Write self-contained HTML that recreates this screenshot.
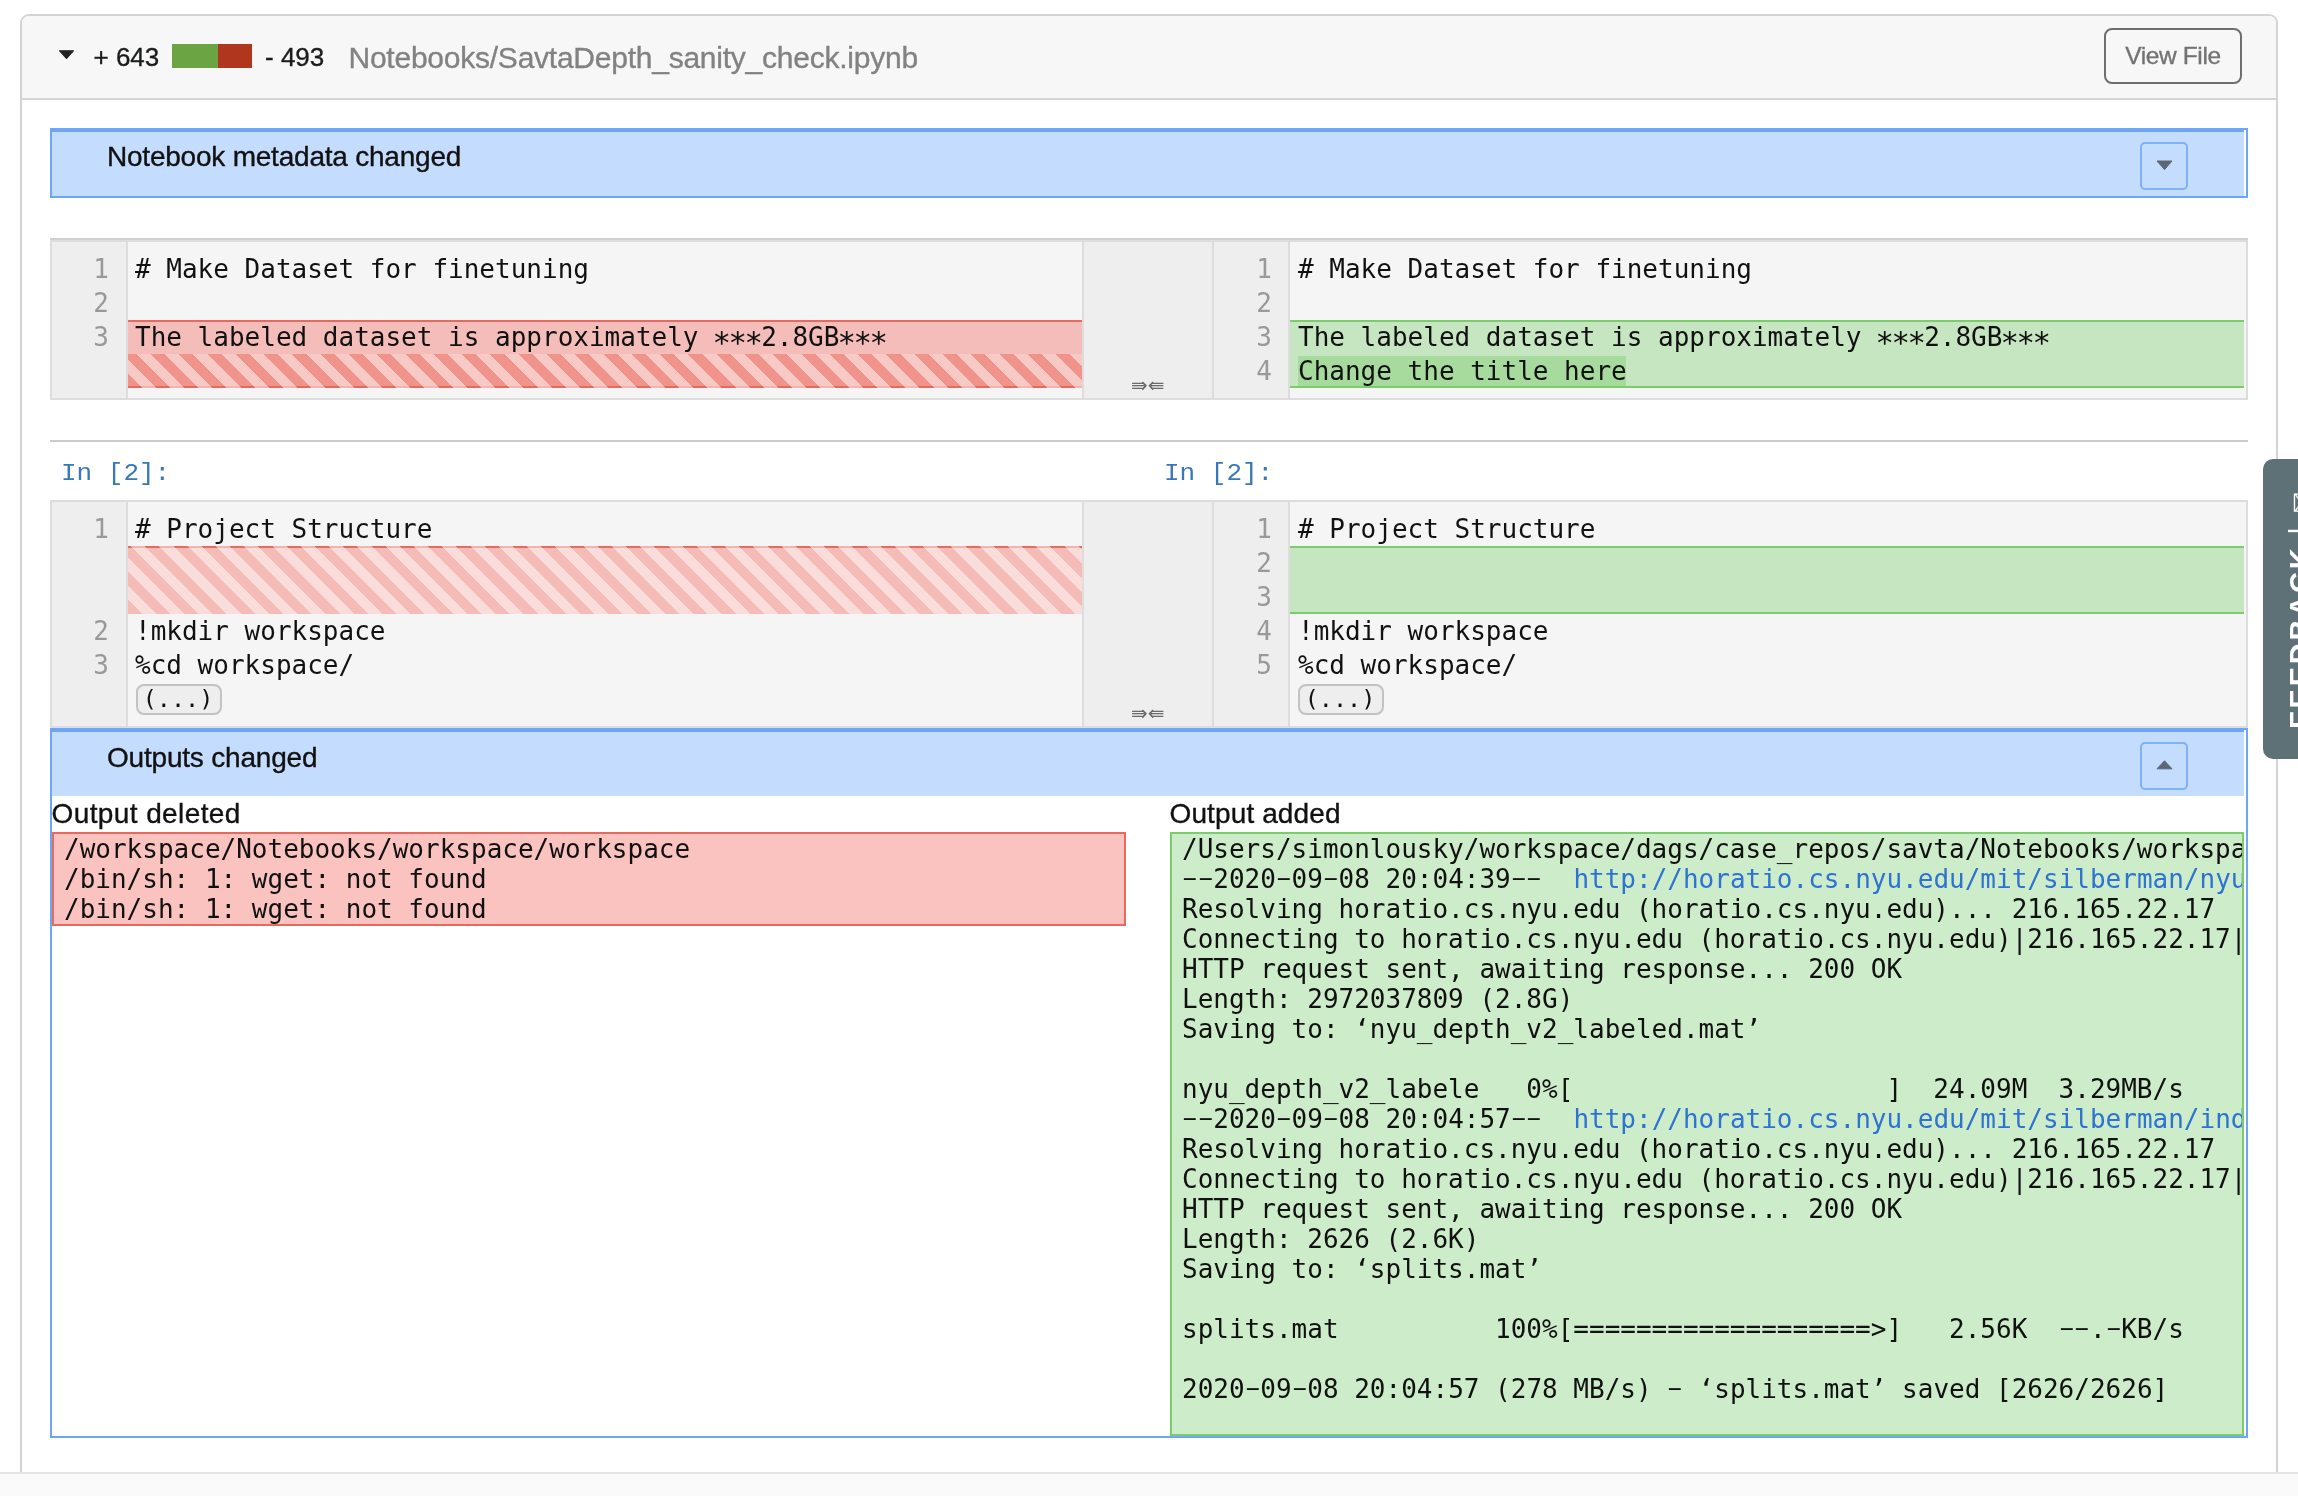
<!DOCTYPE html>
<html lang="en">
<head>
<meta charset="utf-8">
<title>Notebooks/SavtaDepth_sanity_check.ipynb diff</title>
<style>
*{box-sizing:border-box;margin:0;padding:0}
html,body{width:2298px;height:1496px;background:#fff}
#root{position:relative;width:2298px;height:1496px;overflow:hidden;background:#fff;will-change:transform;font-family:"Liberation Sans",sans-serif;color:#1b1c1d}
.abs{position:absolute}
.mono{font-family:"DejaVu Sans Mono","Liberation Mono",monospace}
/* Lato-like weight */
.stat,#fname,#vf,.ban .t,.olabel{-webkit-text-stroke:0.35px currentColor}
/* outer file box */
#box{left:20px;top:14px;width:2258px;height:1470px;border:2px solid #d4d4d5;border-radius:9px 9px 0 0;border-bottom:none;background:#fff}
#hdr{left:22px;top:16px;width:2254px;height:84px;background:#f7f7f7;border-bottom:2px solid #d4d4d5;border-radius:7px 7px 0 0}
#tri{left:58px;top:48px;width:18px;height:14px}
.stat{top:41px;font-size:26px;line-height:32px;color:#1b1c1d;white-space:nowrap}
#bar-g{left:172px;top:44px;width:46px;height:24px;background:#6aa443}
#bar-r{left:218px;top:44px;width:34px;height:24px;background:#b1361e}
#fname{left:348.5px;top:39px;font-size:30px;line-height:38px;color:#828282;white-space:nowrap;letter-spacing:-0.24px}
#vf{left:2104px;top:28px;width:138px;height:56px;border:2px solid #6e6e6e;border-radius:8px;background:#f7f7f7;color:#737373;font-size:24.5px;line-height:52px;text-align:center;letter-spacing:-0.4px}
/* blue banners */
.ban{left:50px;width:2198px;background:#c4dcfd;border:2px solid #6ea6f7;border-top-width:4px}
.ban .t{left:55px;font-size:28px;line-height:34px;color:#111;white-space:nowrap}
.ban .btn{left:2088px;width:48px;height:48px;border:2px solid #7db1f9;border-radius:5px;background:#c4dcfd}
.ban .wl{left:2192px;top:-2px;width:2px;background:#fff}
/* editors */
.ed{background:#f5f5f5;border:2px solid #dddddd}
.gut{background:#eeeeee;border-right:2px solid #dddddd}
.ln{font-size:26px;line-height:34px;color:#999;text-align:right;width:58px;white-space:pre}
.cl{font-size:26px;line-height:34px;color:#111;white-space:pre}
.gap{background:#eeeeee;border-top:2px solid #ddd;border-bottom:2px solid #ddd}
.arrows{font-family:"DejaVu Sans",sans-serif;font-size:20px;line-height:20px;color:#6b6b6b;white-space:nowrap}
.fold{border:2px solid #c2c2c2;border-radius:8px;background:#eeeeee;font-size:23.5px;line-height:27px;color:#111;text-align:center;white-space:pre;padding-right:2px}
.prompt{font-family:"Liberation Mono",monospace;font-size:26px;line-height:30px;color:#3877b8;white-space:pre;transform:scaleY(.9);transform-origin:0 77%}
/* hatches */
.hatch-d{background-color:#f0948b;background-image:repeating-linear-gradient(45deg,rgba(255,255,255,0) 0,rgba(255,255,255,0) 10px,rgba(255,255,255,.5) 10px,rgba(255,255,255,.5) 20px)}
.stripes{background-image:repeating-linear-gradient(45deg,rgba(255,255,255,0) 0,rgba(255,255,255,0) 10px,rgba(255,255,255,.5) 10px,rgba(255,255,255,.5) 20px)}
.hatch-l{background-color:#f4bbb7;background-image:repeating-linear-gradient(45deg,rgba(255,255,255,0) 0,rgba(255,255,255,0) 10px,rgba(255,255,255,.5) 10px,rgba(255,255,255,.5) 20px)}
/* Menlo-like glyph shapes */
.hy{display:inline-block;transform:translateY(-2.2px) scale(1.8,.9)}
.as{display:inline-block;transform:translateY(5.6px) scale(1.18)}
/* outputs */
.olabel{font-size:28px;line-height:34px;color:#111;white-space:nowrap}
.out{font-size:26px;line-height:30px;color:#111;white-space:pre;overflow:hidden}
.out .lnk{color:#2e72d2}
</style>
</head>
<body>
<div id="root">
<div id="box" class="abs"></div>
<div id="hdr" class="abs"></div>
<svg id="tri" class="abs" viewBox="0 0 18 14"><path d="M1.6 2.8 L15.4 2.8 L8.5 10.4 Z" fill="#222" stroke="#222" stroke-width="1.2" stroke-linejoin="round"/></svg>
<div class="abs stat" style="left:93.5px">+ 643</div>
<div id="bar-g" class="abs"></div><div id="bar-r" class="abs"></div>
<div class="abs stat" style="left:265px">- 493</div>
<div id="fname" class="abs">Notebooks/SavtaDepth_sanity_check.ipynb</div>
<div id="vf" class="abs">View File</div>

<!-- banner 1 -->
<div class="abs ban" style="top:128px;height:70px">
  <div class="abs t" style="top:8px;letter-spacing:-0.22px">Notebook metadata changed</div>
  <div class="abs btn" style="top:10px"><svg width="44" height="44" viewBox="0 0 44 44"><path d="M15 17 L30 17 L22.5 25.6 Z" fill="#5c6675" stroke="#5c6675" stroke-width="1" stroke-linejoin="round"/></svg></div>
  <div class="abs wl" style="height:66px"></div>
</div>

<div class="abs" style="left:50px;top:238px;width:2198px;height:2px;background:#cfcfcf"></div>
<!-- cell 1 : left editor -->
<div class="abs ed" style="left:50px;top:240px;width:1034px;height:160px"></div>
<div class="abs gut" style="left:52px;top:242px;width:76px;height:156px"></div>
<div class="abs ln mono" style="left:51px;top:252px">1
2
3</div>
<div class="abs" style="left:128px;top:320px;width:954px;height:34px;background:#f5bdb9;border-top:2px solid #e8695d"></div>
<div class="abs" style="left:128px;top:354px;width:954px;height:34px;background:#f0948b;border-bottom:2px solid #e8695d"></div><div class="abs stripes" style="left:128px;top:354px;width:954px;height:34px"></div>
<div class="abs cl mono" style="left:135px;top:252px"># Make Dataset for finetuning

The labeled dataset is approximately <span class="as">*</span><span class="as">*</span><span class="as">*</span>2.8GB<span class="as">*</span><span class="as">*</span><span class="as">*</span></div>
<!-- cell 1 : gap -->
<div class="abs gap" style="left:1084px;top:240px;width:128px;height:160px"></div>
<div class="abs arrows" style="left:1131px;top:375px">⇛⇚</div>
<!-- cell 1 : right editor -->
<div class="abs ed" style="left:1212px;top:240px;width:1036px;height:160px"></div>
<div class="abs gut" style="left:1214px;top:242px;width:76px;height:156px"></div>
<div class="abs ln mono" style="left:1214px;top:252px">1
2
3
4</div>
<div class="abs" style="left:1290px;top:320px;width:954px;height:68px;background:#c6e6c1;border-top:2px solid #7bcd6b;border-bottom:2px solid #7bcd6b"></div>
<div class="abs" style="left:1298px;top:356px;width:328px;height:30px;background:#a7db9d"></div>
<div class="abs cl mono" style="left:1298px;top:252px"># Make Dataset for finetuning

The labeled dataset is approximately <span class="as">*</span><span class="as">*</span><span class="as">*</span>2.8GB<span class="as">*</span><span class="as">*</span><span class="as">*</span>
Change the title here</div>

<!-- separator -->
<div class="abs" style="left:50px;top:440px;width:2198px;height:2px;background:#cbcbcb"></div>
<div class="abs prompt" style="left:61px;top:458px">In [2]:</div>
<div class="abs prompt" style="left:1164px;top:458px">In [2]:</div>

<!-- cell 2 : left editor -->
<div class="abs ed" style="left:50px;top:500px;width:1034px;height:228px"></div>
<div class="abs gut" style="left:52px;top:502px;width:76px;height:224px"></div>
<div class="abs ln mono" style="left:51px;top:512px">1


2
3</div>
<div class="abs" style="left:128px;top:546px;width:954px;height:68px;background:#f4bbb7;border-top:2px solid #e8695d"></div><div class="abs stripes" style="left:128px;top:546px;width:954px;height:68px"></div>
<div class="abs cl mono" style="left:135px;top:512px"># Project Structure


!mkdir workspace
%cd workspace/</div>
<div class="abs fold mono" style="left:136px;top:684px;width:86px;height:31px">(...)</div>
<!-- cell 2 : gap -->
<div class="abs gap" style="left:1084px;top:500px;width:128px;height:228px"></div>
<div class="abs arrows" style="left:1131px;top:703px">⇛⇚</div>
<!-- cell 2 : right editor -->
<div class="abs ed" style="left:1212px;top:500px;width:1036px;height:228px"></div>
<div class="abs gut" style="left:1214px;top:502px;width:76px;height:224px"></div>
<div class="abs ln mono" style="left:1214px;top:512px">1
2
3
4
5</div>
<div class="abs" style="left:1290px;top:546px;width:954px;height:68px;background:#c6e6c1;border-top:2px solid #7bcd6b;border-bottom:2px solid #7bcd6b"></div>
<div class="abs cl mono" style="left:1298px;top:512px"># Project Structure


!mkdir workspace
%cd workspace/</div>
<div class="abs fold mono" style="left:1298px;top:684px;width:86px;height:31px">(...)</div>

<!-- outputs container -->
<div class="abs" style="left:50px;top:796px;width:2198px;height:642px;border:2px solid #6ea6f7;border-top:none;background:#fff"></div>
<!-- banner 2 -->
<div class="abs ban" style="top:728px;height:68px;border-bottom:none">
  <div class="abs t" style="top:9px;letter-spacing:-0.2px">Outputs changed</div>
  <div class="abs btn" style="top:10px"><svg width="44" height="44" viewBox="0 0 44 44"><path d="M15 24.8 L30 24.8 L22.5 16.8 Z" fill="#5c6675" stroke="#5c6675" stroke-width="1" stroke-linejoin="round"/></svg></div>
  <div class="abs wl" style="height:66px"></div>
</div>
<div class="abs olabel" style="left:51.5px;top:797px;letter-spacing:0.4px">Output deleted</div>
<div class="abs olabel" style="left:1169.5px;top:797px;letter-spacing:0.12px">Output added</div>
<div class="abs out mono" style="left:52px;top:832px;width:1074px;height:94px;background:#fac3c0;border:2px solid #e8695d;padding:0 0 0 10px">/workspace/Notebooks/workspace/workspace
/bin/sh: 1: wget: not found
/bin/sh: 1: wget: not found</div>
<div class="abs out mono" style="left:1170px;top:832px;width:1074px;height:604px;background:#cdecc9;border:2px solid #7bcd6b;padding:0 0 0 10px">/Users/simonlousky/workspace/dags/case_repos/savta/Notebooks/workspace
<span class="hy">-</span><span class="hy">-</span>2020<span class="hy">-</span>09<span class="hy">-</span>08 20:04:39<span class="hy">-</span><span class="hy">-</span>  <span class="lnk">http://horatio.cs.nyu.edu/mit/silberman/nyu_depth_v2/nyu_depth_v2_labeled.mat</span>
Resolving horatio.cs.nyu.edu (horatio.cs.nyu.edu)... 216.165.22.17
Connecting to horatio.cs.nyu.edu (horatio.cs.nyu.edu)|216.165.22.17|:80... connected.
HTTP request sent, awaiting response... 200 OK
Length: 2972037809 (2.8G)
Saving to: ‘nyu_depth_v2_labeled.mat’

nyu_depth_v2_labele   0%[                    ]  24.09M  3.29MB/s
<span class="hy">-</span><span class="hy">-</span>2020<span class="hy">-</span>09<span class="hy">-</span>08 20:04:57<span class="hy">-</span><span class="hy">-</span>  <span class="lnk">http://horatio.cs.nyu.edu/mit/silberman/indoor_seg_sup/splits.mat</span>
Resolving horatio.cs.nyu.edu (horatio.cs.nyu.edu)... 216.165.22.17
Connecting to horatio.cs.nyu.edu (horatio.cs.nyu.edu)|216.165.22.17|:80... connected.
HTTP request sent, awaiting response... 200 OK
Length: 2626 (2.6K)
Saving to: ‘splits.mat’

splits.mat          100%[===================&gt;]   2.56K  <span class="hy">-</span><span class="hy">-</span>.<span class="hy">-</span>KB/s

2020<span class="hy">-</span>09<span class="hy">-</span>08 20:04:57 (278 MB/s) <span class="hy">-</span> ‘splits.mat’ saved [2626/2626]
</div>

<!-- bottom strip -->
<div class="abs" style="left:0;top:1472px;width:2298px;height:24px;background:#fafafa;border-top:2px solid #e4e4e4"></div>

<!-- feedback tab -->
<div class="abs" id="fb" style="left:2263px;top:459px;width:35px;height:300px;background:#5e7177;border-radius:10px 0 0 10px;overflow:hidden">
  <div class="abs" style="left:17.3px;top:270px;width:300px;height:40px;transform-origin:0 0;transform:rotate(-90deg);color:#fff;font-size:29px;font-weight:bold;line-height:40px;letter-spacing:2.8px;white-space:nowrap">FEEDBACK <span style="font-weight:normal">|</span> <span style="font-family:'DejaVu Sans',sans-serif;font-weight:normal;font-size:26px">✉</span></div>
</div>
</div>
</body>
</html>
